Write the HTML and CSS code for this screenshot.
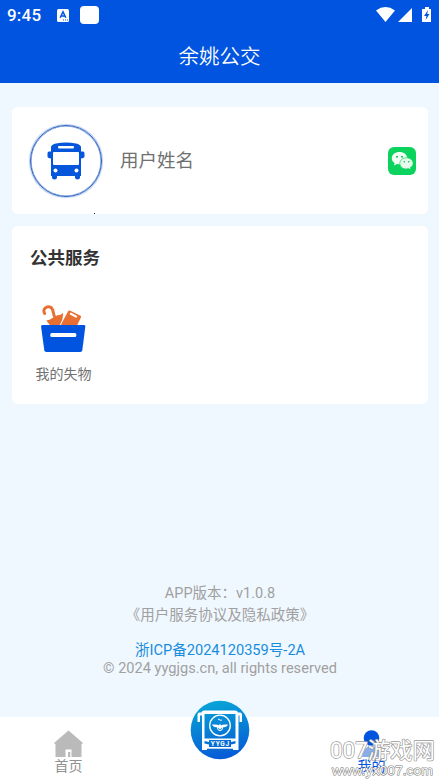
FILE: index.html
```html
<!DOCTYPE html>
<html lang="zh-CN">
<head>
<meta charset="utf-8">
<title>余姚公交</title>
<link rel="stylesheet" href="styles.css">
</head>
<body>
<div class="app">
  <header class="header">
    <div class="status">
      <span class="time">9:45</span>
      <svg class="keyboard" width="12" height="13" viewBox="0 0 12 13"><rect width="12" height="13" rx="1.5" fill="#fff"/><path d="M3.200 8.800 6 2.800l2.800 6M4.200 7h3.600" fill="none" stroke="#0054df" stroke-width="1.500"/><path d="M6 11h1m1 0h1m1 0h1" stroke="#0054df"/></svg>
      <span class="blank"></span>
      <svg class="signals" width="57" height="18" viewBox="0 0 57 18"><path d="M0 4.400Q9.500-2.500 19 4.400L9.500 16ZM36 2v14H22ZM46 3h3V1h4v2h2v13h-9Z" fill="#fff"/><path d="m52 4-4 6h2.400l-.7 4 3.800-6h-2.300Z" fill="#0054df"/></svg>
    </div>
    <h1 class="title">余姚公交</h1>
  </header>
  <main class="main">
    <section class="card profile">
      <div class="avatar">
        <svg width="38" height="38" viewBox="0 0 38 38"><path fill="#0556db" fill-rule="evenodd" d="M4 5Q4.500 2.500 9 1.500Q19-.3 29 1.500Q33.500 2.500 34 5V9.500H36Q37.500 9.500 37.500 11.500V14.500Q37.500 16 34 16.500V34H33V35.500Q33 37.500 30.500 37.500T28 35.500V34H10V35.500Q10 37.500 7.500 37.500T5 35.500V34H4V16.500Q.5 16 .5 14.500V11.500Q.5 9.500 2 9.500H4ZM12 4Q11 4 11 5.200T12 6.500H26Q27 6.500 27 5.200T26 4ZM7 10Q6 10 6 11V22Q6 23 7 23H31Q32 23 32 22V11Q32 10 31 10Z"/><circle cx="8.500" cy="28.500" r="2" fill="#fff"/><circle cx="29.500" cy="28.500" r="2" fill="#fff"/></svg>
      </div>
      <span class="username">用户姓名</span>
      <svg class="wechat" width="28" height="28" viewBox="0 0 28 28"><rect width="28" height="28" rx="6" fill="#0bd35e"/><path d="M11.500 5C7 5 3.800 7.700 3.800 11.200c0 2 1 3.700 2.800 4.800L6 18.500l3-1.500c5.800 1.400 10.200-1.700 10.200-5.800C19.200 7.700 16 5 11.500 5Z" fill="#f4fff6"/><path d="M18.500 10.800c-3.900 0-6.700 2.500-6.700 5.600 0 3.900 4.300 6.500 8.600 5.200l2.600 1.200-.6-2.300c1.700-1 2.700-2.500 2.700-4.100 0-3.100-2.800-5.600-6.600-5.600Z" fill="#e5faeb" stroke="#0bd35e" stroke-width=".7"/><g fill="#0bbd52"><circle cx="9" cy="9.700" r="1"/><circle cx="14" cy="9.700" r="1"/><circle cx="16.300" cy="14.700" r=".8"/><circle cx="20.700" cy="14.700" r=".8"/></g></svg>
    </section>
    <section class="card services">
      <h2 class="heading">公共服务</h2>
      <div class="service">
        <svg width="46" height="48" viewBox="0.700 0 46 48"><path d="M4.300 8.500C1.800 4 6.500.7 10 2.200c3.800 1.700 2 5.500 4.500 10" fill="none" stroke="#e86f32" stroke-width="2.900" stroke-linecap="round"/><path d="M6 15.500q3.500-.2 6-2.500 3.500-.2 5-3 3.500.8 5.600-2.200.7 6-3.200 12.200H9.500Z" fill="#e86f32"/><path d="m29.500 5.600 10.700 5.200q1 .5.500 1.500L37 20H20.500l7.300-13.700q.6-1.200 1.700-.7Z" fill="#e86f32"/><path d="m30.500 8.800 5.300 2.800" stroke="#fff" stroke-width="2.200" stroke-linecap="round"/><path d="M2.500 20h41q1.700 0 1.500 1.800l-3 23.500q-.3 1.700-2 1.700H6q-1.700 0-2-1.700L.8 21.800Q.6 20 2.500 20Z" fill="#0054df"/><rect x="10" y="28" width="26" height="4" rx="1.500" fill="#fff"/></svg>
        <span class="service-name">我的失物</span>
      </div>
    </section>
    <footer class="info">
      <p class="version">APP版本：v1.0.8</p>
      <p class="policy">《用户服务协议及隐私政策》</p>
      <p class="icp">浙ICP备2024120359号-2A</p>
      <p class="copyright">© 2024 yygjgs.cn, all rights reserved</p>
    </footer>
  </main>
  <nav class="tabs">
    <div class="tab">
      <svg width="29" height="28" viewBox="0 0 29 28"><path d="M14.500.5 29 13l-1.500 1.500V27H1.500V14.500L0 13Z" fill="#bababa"/><path d="M11.500 27v-7.500h6V27h-1.200v-5h-2.300v5Z" fill="#fff"/></svg>
      <span>首页</span>
    </div>
    <div class="bus-button">
      <svg width="60" height="60" viewBox="0 0 60 60"><defs><linearGradient id="blue" x1=".4" y1="0" x2=".6" y2="1"><stop offset="0" stop-color="#08a4d8"/><stop offset=".55" stop-color="#087bd5"/><stop offset="1" stop-color="#0559d6"/></linearGradient></defs><circle cx="30" cy="30" r="29.300" fill="url(#blue)"/><path fill="#fff" fill-rule="evenodd" d="M14 10.500H45Q47.500 10.500 48 12.500H50Q52 12.500 52 14.500V22H49.500V15.500H48.500V50H12V15.500H10V22H7.500V14.500Q7.500 12.500 9.500 12.500H11.500Q12 10.500 14 10.500ZM14.500 14V38.500H45.500V14ZM14.500 41V43.500L19 44.500V47H41V44.500L45.500 43.500V41L41 42V40H19V42Z"/><path d="M17 48.700h26V50.500H17Z" fill="#0869d3"/><circle cx="30" cy="25.500" r="10.300" fill="none" stroke="#fff" stroke-width="1.300"/><path d="M22 24.500q6-.5 7 1l1-2 1 2q1.500-1.500 7-1-1 3-6 3l-2 2-2-2q-5 0-6-3Z" fill="#fff"/><circle cx="30" cy="28" r="2.500" fill="none" stroke="#fff" stroke-width="1"/><path d="M28 19q3 2 4 1" fill="none" stroke="#fff"/><text class="bus-text" x="30.400" y="46" text-anchor="middle">YYGJ</text></svg>
    </div>
    <div class="tab active">
      <svg width="29" height="28" viewBox="0 0 29 28"><circle cx="14.500" cy="8" r="7.800" fill="#0054df"/><path d="M5 27q1-11 10-11t9 11Z" fill="#86aee9"/></svg>
      <span>我的</span>
    </div>
  </nav>
  <svg class="watermark" width="114" height="48" viewBox="0 0 114 48"><text class="mark-name" x="5" y="25" textLength="105" lengthAdjust="spacingAndGlyphs">007游戏网</text><text class="mark-site" x="7" y="41.500" textLength="101" lengthAdjust="spacingAndGlyphs">www.yx007.com</text></svg>
  <i class="speck"></i>
</div>
</body>
</html>
```
FILE: styles.css
```css
* { box-sizing: border-box; }
body { margin: 0; font-family: Roboto, "Noto Sans CJK SC", sans-serif; }
.app { position: relative; height: 782px; display: flex; flex-direction: column; background: #f0f8ff; overflow: hidden; }
.header { height: 83px; flex: none; background: #0054df; color: #fff; }
.status { display: flex; align-items: center; height: 30px; padding: 0 7px; }
.time { width: 50px; font-size: 17px; line-height: 30px; letter-spacing: .2px; font-weight: 480; }
.blank { width: 19px; height: 18px; border-radius: 4px; background: #fff; margin-left: 11px; }
.signals { margin-left: auto; margin-right: -1px; }
.title { margin: 0; font-size: 20.500px; font-weight: 350; line-height: 54px; text-align: center; }
.main { flex: 1; padding: 24px 11px 0 12px; display: flex; flex-direction: column; }
.card { background: #fff; border-radius: 6px; }
.profile { height: 107px; display: flex; align-items: center; padding: 0 12px 0 18px; }
.avatar { width: 72px; height: 72px; border: 1px solid #2c62bd; border-radius: 50%; box-shadow: inset 0 0 0 .6px #6f95dc, 0 0 1px 1px #b9ccef; display: flex; align-items: center; justify-content: center; }
.username { margin-left: 18px; color: #707070; font-size: 18.500px; line-height: 28px; }
.wechat { margin-left: auto; }
.services { height: 178px; margin-top: 12px; padding: 19px 18px 18px; }
.heading { margin: 0; color: #333; font-size: 17.500px; line-height: 27px; font-weight: 700; }
.service { width: 67px; margin-top: 33px; display: flex; flex-direction: column; align-items: center; }
.service-name { margin-top: 9px; font-size: 14px; line-height: 24px; color: #707070; }
.info { margin-top: auto; height: 134px; text-align: center; color: #a0a0a0; }
.info p { margin: 0; }
.version { font-size: 14.500px; line-height: 22px; }
.policy { font-size: 14.500px; line-height: 22px; }
.info .icp { margin-top: 14px; font-size: 14.600px; line-height: 19px; color: #188cde; }
.copyright { font-size: 14.600px; line-height: 16px; }
.tabs { height: 65px; flex: none; background: #fff; display: grid; grid-template-columns: 137px 1fr 137px; }
.tab { display: flex; flex-direction: column; align-items: center; padding-top: 13px; font-size: 14px; line-height: 16px; color: #909090; }
.tab svg { display: block; flex: none; }
.active { color: #0054df; padding-left: 2px; }
.bus-button { justify-self: center; margin-top: -17px; height: 60px; }
.bus-text { fill: #fff; font: 700 6.500px Roboto, sans-serif; letter-spacing: .8px; }
.watermark { position: absolute; right: 0; top: 733px; }
.watermark text { fill: #fff; stroke: #999; stroke-width: 1.400px; paint-order: stroke; stroke-linejoin: round; }
.mark-name { font: 400 22px Roboto, "Noto Sans CJK SC", sans-serif; }
.watermark .mark-site { font: 400 13px "Liberation Sans", sans-serif; stroke: #777; stroke-width: 1px; }
.speck { position: absolute; left: 94px; top: 213px; width: 1px; height: 1px; background: #222; }
```
